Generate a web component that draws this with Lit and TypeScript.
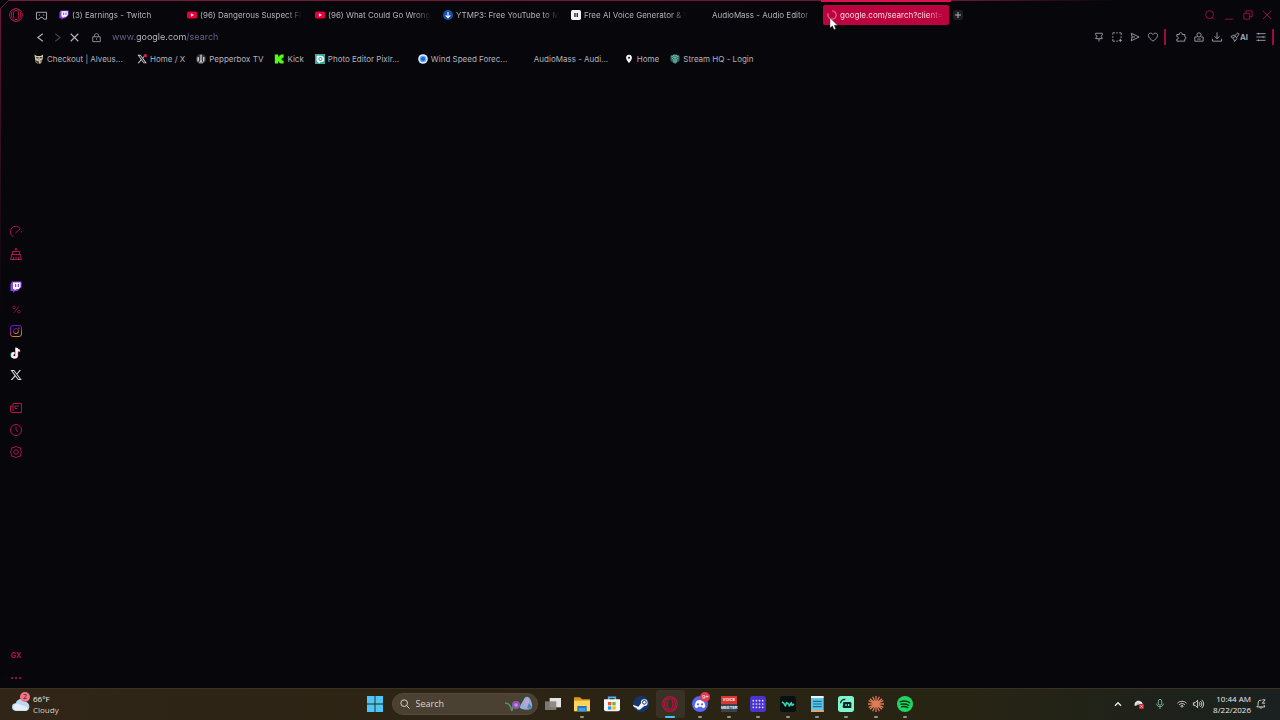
import { LitElement, html, css, svg, nothing, TemplateResult } from "lit";
import { customElement } from "lit/decorators.js";
import { classMap } from "lit/directives/class-map.js";

type Icon = TemplateResult | typeof nothing;

/** Outline icon on a 24 unit grid. */
const line = (body: unknown, cls = "") =>
  html`<svg class="line ${cls}" viewBox="0 0 24 24" aria-hidden="true">${body}</svg>`;
const art = (body: unknown, cls = "") =>
  html`<svg class=${cls} viewBox="0 0 24 24" aria-hidden="true">${body}</svg>`;

const X_PATH = "M1 2h7.500l5 6.800L19 2h3l-7.200 8.300L23.500 22H16l-5.400-7.200L4.400 22H1.300l7.800-8.900zM5 3.900 16.900 20.200h2.600L7.600 3.900z";

const opera = svg`<circle cx="12" cy="12" r="11"/><ellipse cx="12" cy="12" rx="4.500" ry="8"/><path d="M14 2c8 3 8 17 0 20M10 2c-8 3-8 17 0 20"/>`;
const twitch = svg`<path fill="#8a3ff0" d="M4 1 1 6v14h5v4l4-4h5l8-8V1z"/><path fill="#fff" d="M6 3h15v9l-4 4h-4l-4 3v-3H6z"/><path fill="#8a3ff0" d="M10 6h2.500v6H10zM15.500 6H18v6h-2.500z"/>`;
const youtube = svg`<rect x="0" y="3.500" width="24" height="17" rx="4" fill="#e8003a"/><path fill="#fff" d="M9.500 8v8l7-4z"/>`;
const download = svg`<circle cx="12" cy="12" r="12" fill="#1553ab"/><path d="M12 4.500v14M6.500 13l5.500 5.500 5.500-5.500" fill="none" stroke="#fff" stroke-width="2.600"/>`;
const eleven = svg`<rect width="24" height="24" rx="4" fill="#f4f4f6"/><path fill="#16161a" d="M8 7h3v10H8zM13.500 7h3v10h-3z"/>`;
const owl = svg`<path fill="#cfc7b4" d="M1 1l6 4h9l6-4-1 10-4 11-7 2-6-4z"/><path fill="#4b4436" d="M5 7h6v4H6zM14 7h6l-2 4h-4zM3 15l8 2 2 7H8zM15 16l4-2-2 8z"/><path fill="#8b7d4a" d="M10 11h4l-2 5z"/>`;
const xNotify = svg`<path fill="#d2d2d8" d="${X_PATH}"/><circle cx="20" cy="4" r="4" fill="#e4194e"/>`;
const pepper = svg`<circle cx="12" cy="12" r="12" fill="#3c3c42"/><path fill="#d4d4d8" d="M10.500 2h3v13l3 7h-3L12 17l-1.500 5h-3l3-7zM4 7h3v8l-2 5-2-5zM17 7h3v9l-2 4-1-4z"/>`;
const kick = svg`<path fill="#53fc18" d="M2 1h8v5h3V3h3V1h7v8h-3v2h-2v3h2v2h3v7h-8v-2h-3v-3h-2v5H2z"/>`;
const pixlr = svg`<rect width="24" height="24" fill="#38a99a"/><path fill="#fff" d="M4 4h10c5 0 8 3 8 8s-3 8-8 8h-2v3l-5-3c-3-2-4-6-3-9z"/><circle cx="13" cy="12" r="5" fill="#38a99a"/><circle cx="13" cy="12" r="2.500" fill="#fff"/>`;
const wind = svg`<circle cx="12" cy="12" r="11.500" fill="#e9f3ff"/><circle cx="12" cy="12" r="8" fill="#5aa8ff"/><circle cx="12" cy="12" r="5" fill="#1767dc"/>`;
const pin = svg`<path fill="#f4f4f6" d="M12 2c-4 0-7 3-7 7 0 5 7 13 7 13s7-8 7-13c0-4-3-7-7-7z"/><circle cx="12" cy="9" r="2.500" fill="#111"/>`;
const stream = svg`<path fill="#28665f" d="M12 0l11 4v12l-11 8-11-8V4z"/><path fill="none" stroke="#85c8bd" stroke-width="2" d="M3 5l9 4 9-4M12 9v13M4 10l5 3v7M20 10l-5 3v7M7 3l5 2 5-2"/>`;
const blank = svg``;

const tabs: { title: string; icon: unknown }[] = [
  { title: "(3) Earnings - Twitch", icon: twitch },
  { title: "(96) Dangerous Suspect Fi", icon: youtube },
  { title: "(96) What Could Go Wrong", icon: youtube },
  { title: "YTMP3: Free YouTube to M", icon: download },
  { title: "Free AI Voice Generator & V", icon: eleven },
  { title: "AudioMass - Audio Editor", icon: blank },
];

const bookmarks: { title: string; icon: unknown; cut?: boolean }[] = [
  { title: "Checkout | Alveus...", icon: owl, cut: true },
  { title: "Home / X", icon: xNotify },
  { title: "Pepperbox TV", icon: pepper },
  { title: "Kick", icon: kick },
  { title: "Photo Editor Pixlr...", icon: pixlr, cut: true },
  { title: "Wind Speed Forec...", icon: wind, cut: true },
  { title: "AudioMass - Audi...", icon: blank, cut: true },
  { title: "Home", icon: pin },
  { title: "Stream HQ - Login", icon: stream },
];

const sideGroups: { name: string; icon: Icon }[][] = [
  [
    { name: "GX Control", icon: line(svg`<path d="M7 21.500A11 11 0 1 1 21 6M11 14l9-8M22.800 10v3"/>`) },
    { name: "GX Cleaner", icon: line(svg`<path d="M12 0v6M9 2h5M5 7h14v6H5zM4 13l-3 10h22l-3-10M7 23v-5M12 23v-5M17 23v-5M2 13h20"/>`) },
  ],
  [
    { name: "Twitch", icon: art(twitch) },
    { name: "Offers", icon: line(svg`<circle cx="5.500" cy="6.500" r="3.500"/><circle cx="18.500" cy="17.500" r="3.500"/><path d="M19 3 5 21"/>`, "small") },
    {
      name: "Instagram",
      icon: line(svg`<defs><linearGradient id="ig" x1="0" y1="0" x2="0.400" y2="1"><stop offset="0" stop-color="#4c22d8"/><stop offset="0.500" stop-color="#a3158b"/><stop offset="1" stop-color="#c98a2b"/></linearGradient></defs><g stroke="url(#ig)"><rect x="1" y="1" width="22" height="22" rx="5"/><circle cx="12" cy="12" r="5"/><circle cx="18" cy="6" r="0.600"/></g>`),
    },
    {
      name: "TikTok",
      icon: art(svg`<g fill="none" stroke-width="4"><path stroke="#25e0dc" d="M12 1v15a4.500 4.500 0 1 1-4.500-4.500"/><path stroke="#f2305c" d="M14.500 3v14a4.500 4.500 0 1 1-4.500-4.500M14.500 3c0 3 2.500 5 6 5"/><path stroke="#fff" d="M13.500 2v14.500A4.500 4.500 0 1 1 9 12M13.500 2c0 3.500 2.500 5 6 5"/></g>`),
    },
    { name: "X", icon: art(svg`<path fill="#d8d8dc" d="${X_PATH}"/>`) },
  ],
  [
    { name: "News", icon: line(svg`<path d="M6 3h17v18H4a3 3 0 0 1-3-3V8h5M6 3v15M10 13V8h8M10 13h4"/>`) },
    { name: "History", icon: line(svg`<circle cx="12" cy="12" r="11"/><path d="M12 5v7l4 3"/>`) },
    { name: "Settings", icon: line(svg`<path d="M12 0l3.500 3 5 .5 1 5L23 12l-1.500 3.500-1 5-5 .5-3.500 3-3.500-3-5-.5-1-5L1 12l1.500-3.500 1-5 5-.5z"/><circle cx="12" cy="12" r="4.500"/>`) },
  ],
];

const toolsLeft: { name: string; icon: Icon }[] = [
  { name: "Pin", icon: line(svg`<path d="M4 3h16v4l-3 3 3 6H4l3-6-3-3zM12 16v7"/>`) },
  { name: "Snapshot", icon: line(svg`<path d="M2 6V2h5M10 2h4M17 2h5v5M22 10v4M2 10v4M2 17v5h5M10 22h4M20 16v8M16 20h8"/>`) },
  { name: "Send", icon: line(svg`<path d="M3 3l19 9L3 21l2-9zM5 12h7"/>`) },
  { name: "Favourite", icon: line(svg`<path d="M12 22C7 18 1 14 1 8c0-6 8-7 11-2 3-5 11-4 11 2 0 6-6 10-11 14z"/>`) },
];
const toolsRight: { name: string; icon: Icon; wide?: boolean }[] = [
  { name: "Extensions", icon: line(svg`<path d="M2 6h6c-2-6 8-6 7 0h6v5c4 0 4 6 0 6v5H2v-5c5 0 5-6 0-6z"/>`) },
  { name: "Profile", icon: line(svg`<circle cx="12" cy="7" r="5"/><path d="M7 12H2v10h20V12h-5M8 17h8"/>`) },
  { name: "Downloads", icon: line(svg`<path d="M12 1v15M6 10l6 6 6-6M1 16v6h22v-6"/>`) },
  { name: "AI", icon: html`${line(svg`<path d="M2 11 10 7l7 8-6 8-2-6zM12 8l7-6 3 3-6 8M7 14l5-3"/>`)}<b>AI</b>`, wide: true },
  { name: "Menu", icon: line(svg`<path d="M1 4h22M1 12h22M1 20h22M6 2v4M17 10v4M6 18v4"/>`) },
];

const apps: { name: string; icon: Icon; open?: boolean; active?: boolean; badge?: string }[] = [
  { name: "Task View", icon: art(svg`<rect x="7" y="3" width="17" height="14" fill="#e6e4e0"/><rect x="0" y="8" width="17" height="13" fill="#85827c" opacity="0.900"/>`) },
  { name: "File Explorer", icon: art(svg`<path fill="#d99a1e" d="M0 2h9l3 3h12v16H0z"/><path fill="#ffd35c" d="M0 7h24v16H0z"/><path fill="#1b79c4" d="M5 15h14v8H5z"/><path fill="#3aa0e8" d="M7 18h10v5H7z"/>`), open: true },
  { name: "Microsoft Store", icon: art(svg`<path fill="none" stroke="#4fb6ec" stroke-width="2.500" d="M7 6V2h10v4"/><path fill="#f4f6f8" d="M0 5h24v15a3 3 0 0 1-3 3H3a3 3 0 0 1-3-3z"/><path fill="#f2502a" d="M6 9h5v5H6z"/><path fill="#77b81e" d="M12.500 9h5v5h-5z"/><path fill="#18a0e8" d="M6 15.500h5v5H6z"/><path fill="#f8b81a" d="M12.500 15.500h5v5h-5z"/>`) },
  { name: "Steam", icon: art(svg`<circle cx="12" cy="12" r="12" fill="#15366c"/><path fill="#f0f4fa" d="M0 13l8 3 4-5a5 5 0 1 1 5 4l-5 4a4 4 0 0 1-7-1l-4-2z"/><circle cx="17" cy="9.500" r="2.800" fill="none" stroke="#15366c" stroke-width="1.500"/>`) },
  { name: "Opera GX", icon: line(opera, "gx"), open: true, active: true },
  { name: "Discord", icon: art(svg`<circle cx="12" cy="12" r="12" fill="#5865f2"/><path fill="#fff" d="M7 7c3-1.500 7-1.500 10 0 2 3 3 6 3 9-1 1-2 2-4 2l-1-2H9l-1 2c-2 0-3-1-4-2 0-3 1-6 3-9z"/><circle cx="9" cy="12.500" r="1.700" fill="#5865f2"/><circle cx="15" cy="12.500" r="1.700" fill="#5865f2"/>`), open: true, badge: "9+" },
  { name: "Voice Meeter", icon: html`<span class="voice"><i>VOICE</i><i>MEETER</i></span>`, open: true },
  { name: "Grid", icon: art(svg`<rect width="24" height="24" rx="4" fill="#4a34cf"/><g fill="#e6e2ff">${[5, 9.7, 14.3, 19].map((x) => [7, 12, 17].map((y) => svg`<circle cx=${x} cy=${y} r="1.300"/>`))}</g>`), open: true },
  { name: "Wave", icon: art(svg`<rect width="24" height="24" rx="4" fill="#0a1011"/><path fill="none" stroke="#36d3ae" stroke-width="2.400" stroke-linejoin="round" d="M3 9l3 2 2 4 2-5 3 2 1 3 3-5 1 4 3-2"/>`), open: true },
  { name: "Notepad", icon: art(svg`<path fill="#5cc4e8" d="M3 2h19v22H3z"/><path fill="#e9f6fb" d="M3 0h19v3H3z"/><path stroke="#176a8c" stroke-width="1.700" d="M6 8h13M6 12h13M6 16h13"/><path fill="#d8a878" d="M3 21h19v3H3z"/>`), open: true },
  { name: "Streamlabs", icon: art(svg`<rect width="24" height="24" rx="4" fill="#7df5cd"/><path fill="#0d2420" d="M8 9h10a2 2 0 0 1 2 2v7H9a2 2 0 0 1-2-2z"/><path fill="none" stroke="#0d2420" stroke-width="2" d="M4 11c0-4 3-6 7-6"/><path stroke="#7df5cd" stroke-width="1.800" d="M12 12v3M16 12v3"/>`), open: true },
  { name: "Claude", icon: art(svg`<path stroke="#e07a5a" stroke-width="1.900" d="M12 0v24M0 12h24M3 4l18 16M21 4 3 20M7 1l10 22M17 1 7 23M1 7l22 10M1 17 23 7"/>`), open: true },
  { name: "Spotify", icon: art(svg`<circle cx="12" cy="12" r="12" fill="#1ed760"/><path fill="none" stroke="#10351c" stroke-width="2.200" stroke-linecap="round" d="M5 8.500c5-1.500 10-1 14 1.500M6 12.500c4-1 8-.7 11.500 1.500M7 16.200c3-.8 6-.5 9 1.200"/>`), open: true },
];

@customElement("app-root")
export class AppRoot extends LitElement {
  static styles = css`
    :host {
      display: flex;
      flex-direction: column;
      height: 100vh;
      position: relative;
      overflow: hidden;
      background: #06060b;
      color: #b4b3bb;
      font: 8px/12px Inter, "Liberation Sans", sans-serif;
    }
    * { box-sizing: border-box; }
    svg { width: 12px; height: 12px; display: block; flex: none; overflow: visible; }
    .line { fill: none; stroke: currentColor; stroke-width: 2; }
    button, a { font: inherit; color: inherit; background: none; border: 0; padding: 0; margin: 0; text-decoration: none; white-space: nowrap; }
    button { display: flex; align-items: center; justify-content: center; flex: none; }
    input { border: 0; outline: 0; background: none; padding: 0; min-width: 0; }

    .frame { position: absolute; inset: 0; width: 100%; height: 100%; pointer-events: none; }

    .browser { flex: 1; display: flex; min-height: 0; }
    .sidebar { width: 32px; flex: none; display: flex; flex-direction: column; align-items: stretch; padding-top: 4px; color: #b01548; }
    .sidebar button { height: 22px; width: 100%; }
    .sidebar .logo svg { width: 14px; height: 14px; stroke-width: 1.700; }
    .groups { margin: auto 0; padding-top: 14px; display: flex; flex-direction: column; gap: 11px; }
    .sidebar .small { width: 9px; height: 9px; }
    .gxmark { font-size: 7px; font-weight: 700; padding-top: 2px; }
    .more svg { fill: currentColor; }

    .content { flex: 1; min-width: 0; display: flex; flex-direction: column; }
    .chrome { padding-top: 4px; }
    .row { height: 22px; display: flex; align-items: center; }

    .tabrow { padding: 0 4px 0 0; gap: 4px; }
    .islands { width: 19px; }
    .islands svg { width: 11px; height: 11px; }
    .tabs { display: flex; gap: 2px; min-width: 0; }
    .tab { position: relative; flex: 0 1 126px; width: 126px; height: 20px; display: flex; align-items: center; gap: 3px; padding: 0 4px; border-radius: 2px; justify-content: flex-start; }
    .tab svg { width: 10px; height: 10px; }
    .tab .title { flex: 1; text-align: left; mask-image: linear-gradient(90deg, #000 calc(100% - 18px), transparent calc(100% - 2px)); }
    .tab.current { background: #bd0240; color: #fbdbe5; }
    .tab.current::before { content: ""; position: absolute; z-index: 1; left: -2px; right: -2px; top: -5px; height: 2px; background: #e0104d; }
    .tab .cursor { position: absolute; left: 7px; top: 13px; width: 8px; height: 12px; }
    .spinner { color: #e8668c; }
    .plus { width: 10px; height: 10px; background: #1d1c26; border-radius: 2px; }
    .plus svg { width: 6px; height: 6px; stroke-width: 4; }
    .window { margin-left: auto; display: flex; color: #b01047; }
    .window button { width: 19px; height: 20px; }
    .window svg { width: 10px; height: 10px; }

    .address .nav { width: 17px; height: 20px; }
    .nav svg { width: 9px; height: 9px; stroke-width: 3; }
    .dim { opacity: 0.35; }
    .lock { width: 27px; display: flex; justify-content: center; }
    .lock svg { width: 9px; height: 9px; }
    .url {
      flex: 1;
      height: 18px;
      margin-left: 2px;
      font: 9px/18px Inter, "Liberation Sans", sans-serif;
      color: transparent;
      background: linear-gradient(90deg, #6b668e 0 25px, #c2c0ca 25px 74px, #6b668e 74px);
      -webkit-background-clip: text;
      background-clip: text;
    }
    .tools { display: flex; align-items: center; color: #aeadb6; }
    .tools button { width: 18px; height: 18px; gap: 1px; }
    .tools button.wide { width: 26px; gap: 0; }
    .tools svg { width: 10px; height: 10px; }
    .tools b { font-size: 8px; font-weight: 600; }
    .bar { width: 2px; height: 16px; background: #a00a3c; margin: 0 6px 0 2px; }

    .bookmarks { gap: 11px; padding-left: 2px; }
    .bookmarks a { display: flex; align-items: center; gap: 3px; }
    .bookmarks svg { width: 10px; height: 10px; }
    .bookmarks .cut { width: 79px; }

    .taskbar {
      position: relative;
      height: 32px;
      flex: none;
      display: grid;
      grid-template-columns: 1fr auto 1fr;
      align-items: center;
      background: linear-gradient(90deg, #302516 0%, #2c2414 40%, #272413 75%, #1a2120 100%);
      box-shadow: inset 0 1px #3a3123;
      color: #f0ebe4;
      font: 8px/11px "Open Sans", "Noto Sans", sans-serif;
    }
    .weather { display: flex; align-items: center; gap: 3px; padding-left: 12px; justify-self: start; text-align: left; }
    .weather svg { width: 18px; height: 18px; }
    .cloud { position: relative; }
    .badge { position: absolute; right: 0; top: -3px; width: 10px; height: 10px; border-radius: 5px; background: #f57385; color: #35131a; font-size: 7px; line-height: 10px; text-align: center; }
    .weather strong { font-weight: 500; display: block; }
    .weather em { font-style: normal; display: block; color: #d5cdc0; }
    .center { display: flex; align-items: center; }
    .start { width: 28px; height: 28px; }
    .start svg { width: 16px; height: 16px; }
    .search { width: 146px; height: 22px; margin: 0 1px 0 3px; border-radius: 11px; background: #4a4133; border: 1px solid #544a3b; display: flex; align-items: center; gap: 6px; padding: 0 2px 0 7px; }
    .search input { flex: 1; font: 9px/14px "Open Sans", "Noto Sans", sans-serif; color: #dcd5ca; }
    .search input::placeholder { color: #dcd5ca; opacity: 1; }
    .search svg { width: 10px; height: 10px; }
    .search .flower { width: 31px; height: 18px; }
    .apps { display: flex; width: 381px; }
    .apps button { flex: 1; height: 28px; position: relative; border-radius: 3px; }
    .apps button.active { background: #3a3126; }
    .apps svg { width: 16px; height: 16px; }
    .apps .gx { color: #a8173c; }
    .apps .open::after { content: ""; position: absolute; left: 50%; bottom: 0; width: 4px; height: 2px; margin-left: -2px; border-radius: 1px; background: #99928a; }
    .apps .active::after { width: 10px; margin-left: -5px; background: #4cc2f0; }
    .apps .badge { right: 4px; top: 2px; background: #e0384e; color: #fff; font-size: 6px; }
    .voice { width: 16px; display: flex; flex-direction: column; }
    .voice i { font: 700 4px/8px "Liberation Sans", sans-serif; height: 8px; background: #d93830; color: #fff; text-align: center; }
    .voice i + i { background: #39434a; }
    .tray { justify-self: end; display: flex; align-items: center; padding-right: 14px; }
    .tray button { height: 24px; }
    .tray svg { width: 10px; height: 10px; }
    .tray .up { width: 20px; }
    .tray .up svg { width: 8px; height: 8px; }
    .app { width: 22px; }
    .mic { width: 20px; margin-right: 7px; color: #7fc0b4; }
    .net { gap: 6px; padding-right: 10px; }
    .clock { text-align: right; }
    .clock time { display: block; }
    .bell { margin-left: 5px; }
  `;

  private tool = (t: { name: string; icon: Icon; wide?: boolean }) =>
    html`<button class=${classMap({ wide: !!t.wide })} aria-label=${t.name}>${t.icon}</button>`;

  render() {
    return html`
      <div class="browser">
        <nav class="sidebar" aria-label="Sidebar">
          <button class="logo" aria-label="Opera menu">${line(opera)}</button>
          <div class="groups">
            ${sideGroups.map((g) => html`<div>${g.map((i) => html`<button aria-label=${i.name}>${i.icon}</button>`)}</div>`)}
          </div>
          <button class="gxmark">GX</button>
          <button class="more" aria-label="More">${art(svg`<circle cx="4" cy="14" r="2.200"/><circle cx="12" cy="14" r="2.200"/><circle cx="20" cy="14" r="2.200"/>`)}</button>
        </nav>
        <div class="content">
          <header class="chrome">
            <div class="row tabrow">
              <button class="islands" aria-label="Tab menu">${line(svg`<path d="M1 5h22v15h-6l-3-4h-4l-3 4H1zM6 11h3M15 11h3"/>`)}</button>
              <div class="tabs" role="tablist">
                ${tabs.map((t) => html`<button class="tab" role="tab">${art(t.icon)}<span class="title">${t.title}</span></button>`)}
                <button class="tab current" role="tab" aria-selected="true">
                  ${line(svg`<path d="M12 2A10 10 0 1 1 3 8" stroke-width="3"/>`, "spinner")}
                  <span class="title">google.com/search?client=</span>
                  <svg class="cursor" viewBox="0 0 8 12" aria-hidden="true"><path fill="#fff" stroke="#333" stroke-width="0.400" d="M0 0v10l2.400-2.200L4 11.500l1.700-.7L4.200 7.200H7.500z"/></svg>
                </button>
              </div>
              <button class="plus" aria-label="New tab">${line(svg`<path d="M12 0v24M0 12h24"/>`)}</button>
              <div class="window">
                <button aria-label="Search tabs">${line(svg`<circle cx="11" cy="11" r="9.500"/><path d="M17 18l5 5"/>`)}</button>
                <button aria-label="Minimize">${line(svg`<path d="M2 22h20"/>`)}</button>
                <button aria-label="Restore">${line(svg`<path d="M2 8h14v14H2zM7 8V2h15v14h-6"/>`)}</button>
                <button aria-label="Close">${line(svg`<path d="M2 2l20 20M22 2 2 22"/>`)}</button>
              </div>
            </div>
            <div class="row address">
              <button class="nav" aria-label="Back">${line(svg`<path d="M18 2 5 12l13 10"/>`)}</button>
              <button class="nav dim" aria-label="Forward">${line(svg`<path d="M6 2l13 10L6 22"/>`)}</button>
              <button class="nav" aria-label="Stop">${line(svg`<path d="M2 2l20 20M22 2 2 22"/>`)}</button>
              <span class="lock">${line(svg`<path d="M2 10h20v13H2zM7 10V6c0-6 10-6 10 0v4M12 14v4"/>`)}</span>
              <input class="url" aria-label="Address" .value=${"www.google.com/search"} />
              <div class="tools">
                ${toolsLeft.map(this.tool)}<span class="bar"></span>${toolsRight.map(this.tool)}<span class="bar"></span>
              </div>
            </div>
            <nav class="row bookmarks" aria-label="Bookmarks">
              ${bookmarks.map((b) => html`<a href="#">${art(b.icon)}<span class=${classMap({ cut: !!b.cut })}>${b.title}</span></a>`)}
            </nav>
          </header>
          <main></main>
        </div>
      </div>
      <footer class="taskbar">
        <button class="weather">
          <span class="cloud">
            ${art(svg`<path fill="#bcd7f3" d="M5 21a5 5 0 0 1 0-10c1-6 10-8 12-2 7-1 9 12 1 12z"/><path fill="#e5effa" d="M5 21a5 5 0 0 1-1-9c5-1 8 2 13 3 4 0 5 4 2 6z"/>`)}
            <span class="badge">2</span>
          </span>
          <span><strong>66°F</strong><em>Cloudy</em></span>
        </button>
        <div class="center">
          <button class="start" aria-label="Start">${art(svg`<path fill="#4cc8f6" d="M0 0h11.300v11.300H0zM12.700 0H24v11.300H12.700zM0 12.700h11.300V24H0zM12.700 12.700H24V24H12.700z"/>`)}</button>
          <label class="search">
            ${line(svg`<circle cx="10" cy="10" r="8"/><path d="M16 16l7 7"/>`)}
            <input type="text" placeholder="Search" aria-label="Search" />
            <svg class="flower" viewBox="0 0 31 18" aria-hidden="true">
              <path fill="none" stroke="#4e9a52" stroke-width="1.500" d="M1 8c4 0 6 3 7 8M8 16c0-4 2-5 4-5"/>
              <circle cx="12" cy="10" r="4" fill="#8e55b5"/><circle cx="12" cy="10" r="1.800" fill="#c58be0"/>
              <path fill="#86b4da" d="M16 13c0-4 3-6 4-9 2-4 6-2 7 2 1 3 2 5 0 8-4 1-8 1-11-1z"/><path fill="#c9a1cf" d="M21 5c2-3 4-1 4 2l-2 6c-3-1-3-5-2-8z"/><path fill="#5682b8" d="M25 8l3 4-2 2-3-1z"/>
            </svg>
          </label>
          <div class="apps">
            ${apps.map((a) => html`<button class=${classMap({ open: !!a.open, active: !!a.active })} aria-label=${a.name}>${a.icon}${a.badge ? html`<span class="badge">${a.badge}</span>` : nothing}</button>`)}
          </div>
        </div>
        <div class="tray">
          <button class="up" aria-label="Hidden icons">${line(svg`<path d="M3 17l9-9 9 9" stroke-width="4"/>`)}</button>
          <button class="app" aria-label="Creative Cloud">${art(svg`<path fill="#e8e4e0" d="M2 17C-1 9 7 2 14 5c6 1 8 7 7 12l-9-4z"/><path fill="#82807c" d="M6 13c2-3 6-3 9 1"/><rect x="12" y="12" width="12" height="12" rx="3" fill="#d81e3c"/><path stroke="#fff" stroke-width="2" d="M15.500 15.500l5 5M20.500 15.500l-5 5"/>`)}</button>
          <button class="mic" aria-label="Microphone">${line(svg`<rect x="8" y="1" width="8" height="14" rx="4"/><path d="M4 11c0 10 16 10 16 0M12 19v5"/>`)}</button>
          <button class="net" aria-label="Network and volume">
            ${line(svg`<path d="M1 10c6-6 16-6 22 0M5 14c4-4 10-4 14 0M9 17c2-2 4-2 6 0l-3 3z"/>`)}
            ${line(svg`<path d="M1 9h4l6-6v18l-6-6H1zM15 8c2 2 2 6 0 8M18 5c4 4 4 10 0 14M21 2c6 6 6 14 0 20"/>`)}
          </button>
          <button class="clock"><span><time>10:44 AM</time><time>8/22/2026</time></span></button>
          <button class="bell" aria-label="Notifications">${line(svg`<path d="M13 3C7 2 5 6 5 10v5l-3 4h19l-2-5M9 20c1 3 5 3 6 0M15 2h7l-7 8h7"/>`)}</button>
        </div>
      </footer>
      <svg class="frame" aria-hidden="true">
        <defs>
          <linearGradient id="top" x1="0" x2="1"><stop offset="0" stop-color="#7a1c3c"/><stop offset="0.750" stop-color="#681633"/><stop offset="0.870" stop-color="#5a122c" stop-opacity="0"/></linearGradient>
          <linearGradient id="side" x1="0" x2="0" y1="0" y2="1"><stop offset="0" stop-color="#6c1a37"/><stop offset="0.450" stop-color="#3a0e20" stop-opacity="0"/></linearGradient>
        </defs>
        <rect x="8" y="0" width="100%" height="1" fill="url(#top)"/>
        <rect x="0" y="8" width="1" height="100%" fill="url(#side)"/>
        <path d="M.5 8.500 8.500.5" stroke="#6c1a37" fill="none"/>
      </svg>
    `;
  }
}
